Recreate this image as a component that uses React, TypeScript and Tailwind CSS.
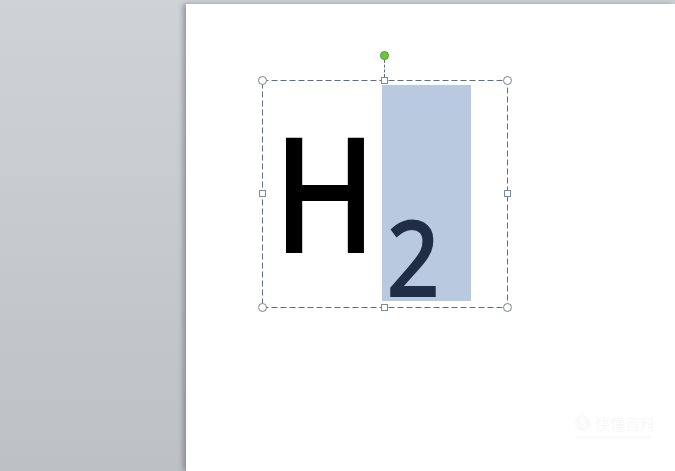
import React from 'react';

const HANDLE_CIRCLE =
  'absolute w-[9px] h-[9px] rounded-full bg-white border border-[#7d838c]';
const HANDLE_SQUARE = 'absolute w-[7px] h-[7px] bg-white border border-[#7d8aa0]';

// dashed frame + handles drawn over the text box
function SelectionFrame() {
  return (
    <>
      <svg className="absolute inset-0 pointer-events-none" width="246" height="228">
        <rect
          x="0.5"
          y="0.5"
          width="245"
          height="227"
          fill="none"
          stroke="#5e6e86"
          strokeWidth="1"
          strokeDasharray="6 3"
        />
      </svg>
      <span className={`${HANDLE_CIRCLE} left-[-4px] top-[-4px]`} />
      <span className={`${HANDLE_CIRCLE} right-[-4px] top-[-4px]`} />
      <span className={`${HANDLE_CIRCLE} left-[-4px] bottom-[-4px]`} />
      <span className={`${HANDLE_CIRCLE} right-[-4px] bottom-[-4px]`} />
      <span className={`${HANDLE_SQUARE} left-[119px] top-[-3px]`} />
      <span className={`${HANDLE_SQUARE} left-[119px] bottom-[-3px]`} />
      <span className={`${HANDLE_SQUARE} left-[-3px] top-[110px]`} />
      <span className={`${HANDLE_SQUARE} right-[-3px] top-[110px]`} />
      <span className="absolute left-[122px] top-[-20px] h-[17px] border-l border-dashed border-[#5e6e86]" />
      <span className="absolute left-[118px] top-[-29px] w-[9px] h-[9px] rounded-full bg-[#72c43c] border border-[#4f9a2a]" />
    </>
  );
}

export default function App() {
  return (
    <div className="w-[675px] h-[471px] overflow-hidden flex bg-[linear-gradient(180deg,#cfd2d7_0%,#c6c9ce_50%,#bdc1c6_100%)] pl-[186px] pt-[4px]">
      <div className="relative flex-1 bg-white shadow-[-3px_0_5px_rgba(80,84,92,0.45)] pl-[76px] pt-[76px]">
        <div
          className="relative w-[246px] h-[228px] flex items-start"
          style={{ fontFamily: '"Open Sans", "Noto Sans", sans-serif' }}
        >
          <span className="ml-[11px] mt-[30px] w-[109px] shrink-0 text-[161px] leading-none font-semibold text-black scale-x-[0.86] origin-left">
            H
          </span>
          <div className="mt-[5px] w-[89px] h-[216px] bg-[#b9c9df] shrink-0">
            <span className="block ml-[4px] mt-[117px] text-[107px] leading-none font-semibold text-[#1f2d46] scale-x-[0.88] origin-left">
              2
            </span>
          </div>
          <SelectionFrame />
        </div>

        <div className="absolute left-[389px] top-[411px] flex flex-col items-start gap-[4px] opacity-30">
          <div className="flex items-center gap-[4px]">
            <span className="w-[16px] h-[16px] rounded-full bg-[#ececec] text-white text-[11px] leading-[16px] text-center font-bold">
              S
            </span>
            <span
              className="text-[15px] leading-none text-[#e8e8e8]"
              style={{ fontFamily: '"Noto Sans CJK SC", sans-serif' }}
            >
              快懂百科
            </span>
          </div>
          <span className="w-[76px] h-[4px] bg-[#f2f2f2]" />
        </div>
      </div>
    </div>
  );
}
